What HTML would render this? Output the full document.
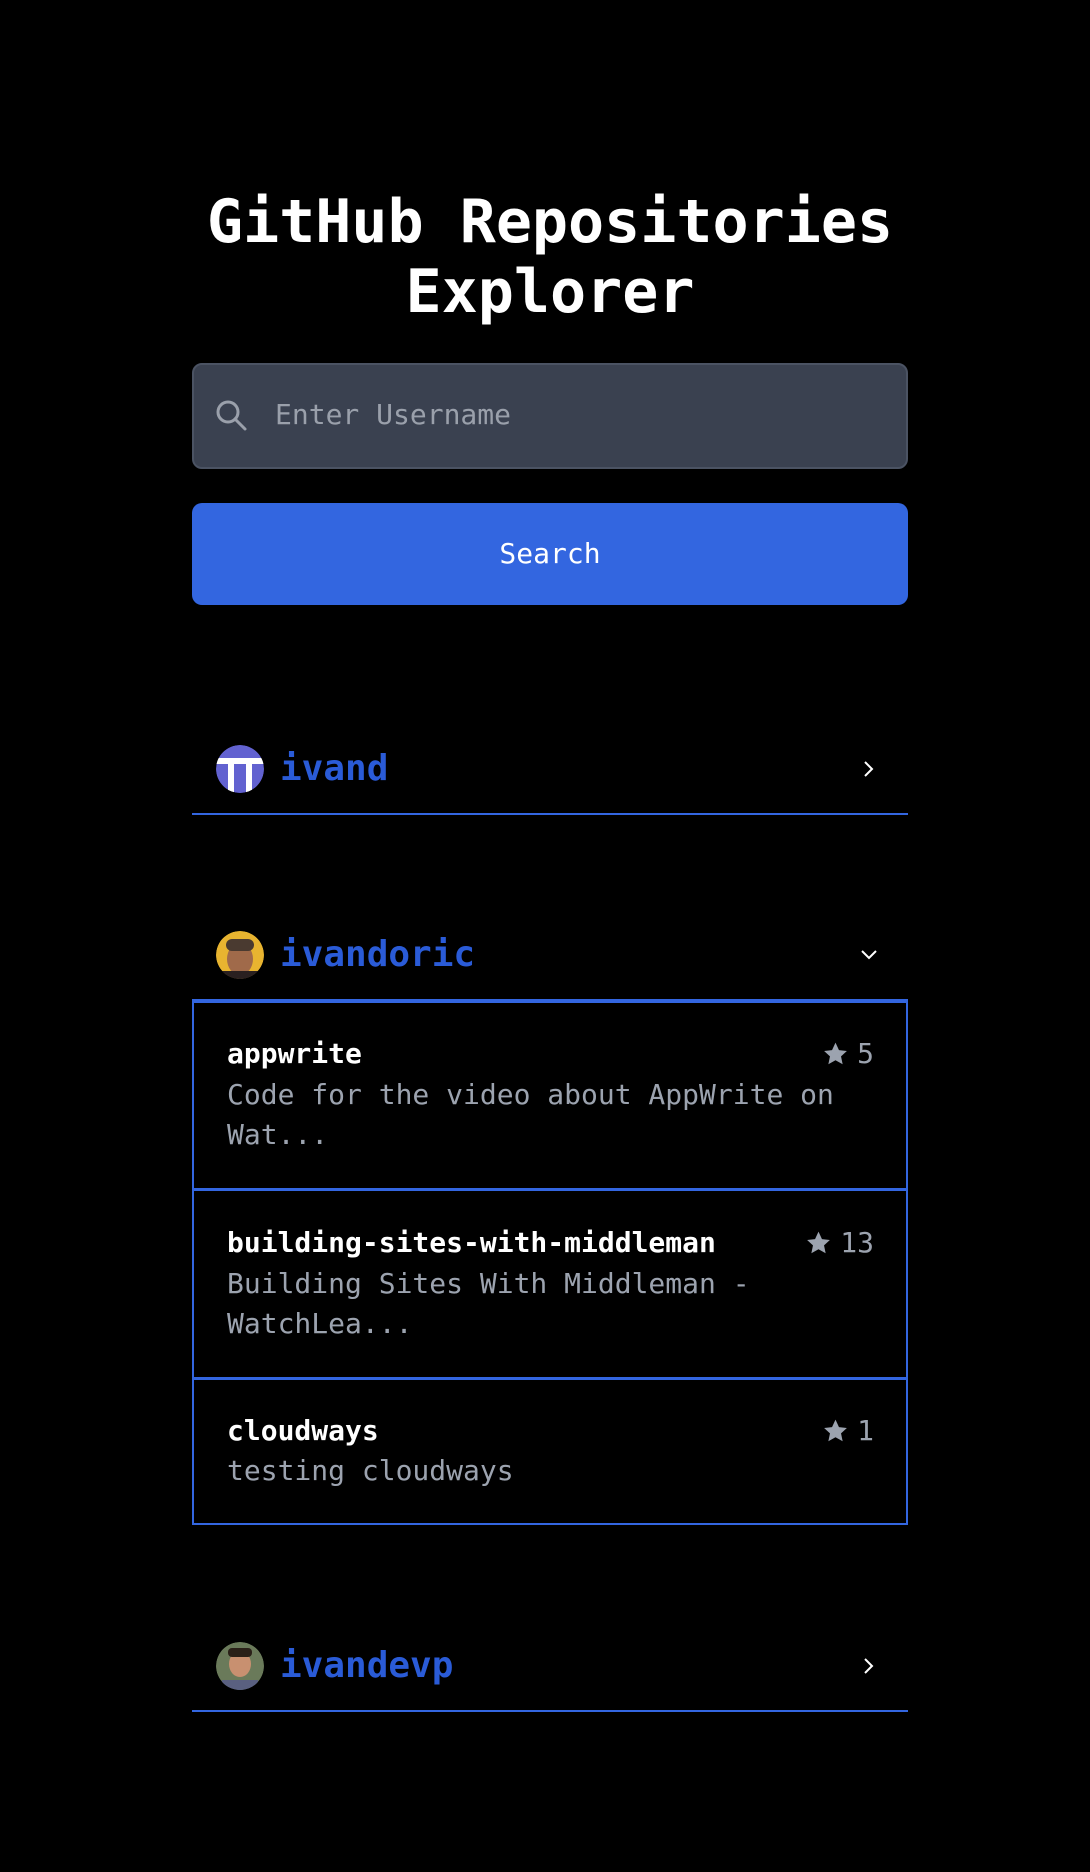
<!DOCTYPE html>
<html><head><meta charset="utf-8"><style>
*{margin:0;padding:0;box-sizing:border-box}
html,body{width:1090px;height:1872px;background:#000;overflow:hidden}
body{position:relative;font-family:"DejaVu Sans Mono","Liberation Mono",monospace;color:#fff}
.abs{position:absolute}
h1{position:absolute;left:0;width:1100px;top:187px;text-align:center;font-size:60px;line-height:70px;font-weight:bold}
.input{left:192px;top:363px;width:716px;height:106px;background:#3a4150;border:2px solid #4b5363;border-radius:10px}
.ph{left:275px;top:395px;font-size:28px;line-height:40px;color:#9aa0ab}
.btn{left:192px;top:503px;width:716px;height:102px;background:#3366e0;border-radius:10px;text-align:center;line-height:102px;font-size:28px;color:#fff}
.name{font-size:36px;font-weight:bold;color:#2a5bd7;line-height:44px}
.line{left:192px;width:716px;height:2px;background:#3366e0}
.av{width:48px;height:48px;border-radius:50%;overflow:hidden}
.list{left:192px;top:1000px;width:716px;height:525px;border:2px solid #3366e0;border-top:3px solid #3366e0}
.sep{left:192px;width:716px;height:3px;background:#3366e0}
.t{font-size:28px;font-weight:bold;line-height:40px;left:227px}
.d{font-size:28px;line-height:40px;color:#9ca3af;left:227px}
.s{font-size:28px;line-height:40px;color:#9ca3af;right:216px;display:flex;align-items:center;gap:8px}
</style></head><body>
<h1>GitHub Repositories<br>Explorer</h1>
<div class="abs input"></div>
<svg class="abs" style="left:214px;top:398px" width="36" height="36" viewBox="0 0 36 36"><circle cx="14" cy="14" r="10" fill="none" stroke="#9aa0ab" stroke-width="3"/><path d="M21 21L31 31" stroke="#9aa0ab" stroke-width="3" stroke-linecap="round"/></svg>
<div class="abs ph">Enter Username</div>
<div class="abs btn">Search</div>

<div class="abs av" style="left:216px;top:745px"><svg width="48" height="48"><circle cx="24" cy="24" r="24" fill="#6262d0"/><rect x="0" y="13" width="48" height="6" fill="#fff"/><rect x="12" y="13" width="6" height="35" fill="#fff"/><rect x="30" y="13" width="6" height="35" fill="#fff"/></svg></div>
<div class="abs name" style="left:280px;top:747px">ivand</div>
<svg class="abs" style="left:861px;top:760px" width="16" height="18"><path d="M4 2L11 9L4 16" fill="none" stroke="#fff" stroke-width="2"/></svg>
<div class="abs line" style="top:813px"></div>

<div class="abs av" style="left:216px;top:931px"><svg width="48" height="48"><circle cx="24" cy="24" r="24" fill="#e8b430"/><ellipse cx="24" cy="28" rx="13" ry="16" fill="#a06a4a"/><rect x="10" y="8" width="28" height="12" rx="6" fill="#4a3a30"/><rect x="6" y="40" width="36" height="10" fill="#2a2020"/></svg></div>
<div class="abs name" style="left:280px;top:933px">ivandoric</div>
<svg class="abs" style="left:860px;top:948px" width="18" height="14"><path d="M2 3L9 10L16 3" fill="none" stroke="#fff" stroke-width="2"/></svg>
<div class="abs line" style="top:999px"></div>

<div class="abs list"></div>
<div class="abs sep" style="top:1188px"></div>
<div class="abs sep" style="top:1377px"></div>

<div class="abs t" style="top:1034px">appwrite</div>
<div class="abs s" style="top:1034px"><svg width="27" height="26" viewBox="0 0 24 24"><path d="M12 1.5l3.2 6.9 7.3.8-5.4 5 1.5 7.3L12 17.8l-6.6 3.7 1.5-7.3-5.4-5 7.3-.8z" fill="#9ca3af"/></svg>5</div>
<div class="abs d" style="top:1075px">Code for the video about AppWrite on<br>Wat...</div>

<div class="abs t" style="top:1223px">building-sites-with-middleman</div>
<div class="abs s" style="top:1223px"><svg width="27" height="26" viewBox="0 0 24 24"><path d="M12 1.5l3.2 6.9 7.3.8-5.4 5 1.5 7.3L12 17.8l-6.6 3.7 1.5-7.3-5.4-5 7.3-.8z" fill="#9ca3af"/></svg>13</div>
<div class="abs d" style="top:1264px">Building Sites With Middleman -<br>WatchLea...</div>

<div class="abs t" style="top:1411px">cloudways</div>
<div class="abs s" style="top:1411px"><svg width="27" height="26" viewBox="0 0 24 24"><path d="M12 1.5l3.2 6.9 7.3.8-5.4 5 1.5 7.3L12 17.8l-6.6 3.7 1.5-7.3-5.4-5 7.3-.8z" fill="#9ca3af"/></svg>1</div>
<div class="abs d" style="top:1451px">testing cloudways</div>

<div class="abs av" style="left:216px;top:1642px"><svg width="48" height="48"><circle cx="24" cy="24" r="24" fill="#6a7a5a"/><ellipse cx="24" cy="22" rx="11" ry="13" fill="#c89070"/><rect x="12" y="6" width="24" height="9" rx="4" fill="#2a2018"/><rect x="6" y="38" width="36" height="12" fill="#5a6080"/></svg></div>
<div class="abs name" style="left:280px;top:1644px">ivandevp</div>
<svg class="abs" style="left:861px;top:1657px" width="16" height="18"><path d="M4 2L11 9L4 16" fill="none" stroke="#fff" stroke-width="2"/></svg>
<div class="abs line" style="top:1710px"></div>
</body></html>
